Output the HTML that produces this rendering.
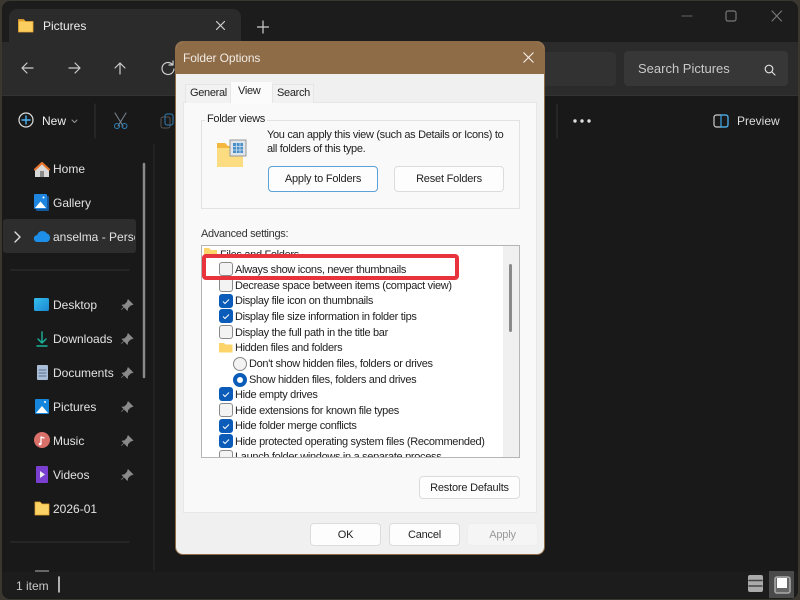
<!DOCTYPE html>
<html><head><meta charset="utf-8"><style>
html,body{margin:0;padding:0;width:800px;height:600px;overflow:hidden;background:#3a3630;font-family:"Liberation Sans",sans-serif}
*{box-sizing:border-box}
.a{position:absolute}
.t{position:absolute;white-space:nowrap;line-height:16px;height:16px}
.n{color:#e2e2e2;font-size:12px}
.d{color:#222;font-size:11px;letter-spacing:-.32px}
.btn{position:absolute;background:#fdfdfd;border:1px solid #dcdcdc;border-radius:4px;color:#222;font-size:11px;letter-spacing:-.2px;text-align:center}
.cb{position:absolute;left:17px;width:14px;height:14px;border-radius:3px;border:1px solid #8a8a8a;background:#f3f3f3}
.cb.on{background:#0a5cb8;border-color:#0a5cb8}
</style></head><body>
<div class="a" style="left:2px;top:1px;width:796px;height:598px;background:#1c1c1c;border-radius:8px;overflow:hidden">
<div class="a" style="left:0;top:41px;width:796px;height:53px;background:#2b2b2b"></div>
<div class="a" style="left:7px;top:8px;width:232px;height:36px;background:#2b2b2b;border-radius:8px 8px 0 0"></div>
<div class="a" style="left:0;top:94px;width:796px;height:477px;background:#191919;border-top:1px solid #333"></div>
<div class="a" style="left:0;top:571px;width:796px;height:27px;background:#1c1c1c"></div>
</div>
<div class="a" style="left:3px;top:219px;width:133px;height:34px;background:#2d2d2d;border-radius:3px"></div>
<div class="a" style="left:624px;top:51px;width:164px;height:35px;background:#373737;border-radius:4px"></div>
<div class="a" style="left:440px;top:52px;width:176px;height:34px;background:#323232;border-radius:4px"></div>
<svg class="a" style="left:0;top:0" width="800" height="600" fill="none" stroke-linecap="round" stroke-linejoin="round">
<defs><linearGradient id="g1" x1="0" y1="0" x2="1" y2="1"><stop offset="0" stop-color="#35c0ee"/><stop offset="1" stop-color="#1a86d0"/></linearGradient></defs>
<path d="M18.500 19.500h5l2 2h7.500v10.500H18.500z" fill="#fbcf5f" stroke="#e8a52e" stroke-width=".8"/>
<path d="M18.500 19.500h5l2 2h-7z" fill="#e8a52e"/>
<path d="M216.500 21.500l8 8M224.500 21.500l-8 8M263 21v12M257.500 27h11" stroke="#d0d0d0" stroke-width="1.200"/>
<path d="M22 68h11M27 63l-5 5 5 5M69 68h11M75 63l5 5-5 5M120 74V63M115 68l5-5 5 5" stroke="#ccc" stroke-width="1.200"/>
<path d="M172 64a6 6 0 1 0 2 5M173 61v4h-4" stroke="#ccc" stroke-width="1.200"/>
<circle cx="26" cy="120" r="7" stroke="#ddd" stroke-width="1.200"/><path d="M26 116v8M22 120h8" stroke="#4fb3f0" stroke-width="1.400"/>
<path d="M72 120l2.500 2.500 2.500-2.500" stroke="#999"/>
<path d="M95 104v34" stroke="#333"/>
<path d="M115 113l8 13M126 113l-8 13" stroke="#77808a" stroke-width="1.100"/><circle cx="117" cy="126" r="2.500" stroke="#2f7fb8"/><circle cx="124.500" cy="126" r="2.500" stroke="#2f7fb8"/>
<rect x="161" y="117" width="9" height="11" rx="2" stroke="#555"/><rect x="165" y="114" width="8" height="11" rx="2" stroke="#2f7fb8"/>
<path d="M557 104v34" stroke="#333"/>
<circle cx="575" cy="121" r="1.700" fill="#ddd"/><circle cx="582" cy="121" r="1.700" fill="#ddd"/><circle cx="589" cy="121" r="1.700" fill="#ddd"/>
<rect x="714" y="115" width="14" height="12" rx="2.500" stroke="#ccc" stroke-width="1.200"/><path d="M721 115h5a2 2 0 0 1 2 2v8a2 2 0 0 1-2 2h-5z" stroke="#3ba7e8" stroke-width="1.200"/>
<path d="M682 16h10" stroke="#555" stroke-width="1.200"/><rect x="726" y="11" width="10" height="10" rx="2" stroke="#777" stroke-width="1.200"/><path d="M772 11l9.500 10M781.500 11l-9.500 10" stroke="#777" stroke-width="1.200"/>
<circle cx="769" cy="69" r="3.800" stroke="#ddd" stroke-width="1.200"/><path d="M772 72l3 3" stroke="#ddd" stroke-width="1.200"/>
<path d="M42 163l-7 6v8h14v-8z" fill="#d8d8d8"/><path d="M35 169.500l7-6.500 7 6.500" stroke="#e8742a" stroke-width="2.200"/><rect x="40" y="171" width="4" height="6" fill="#8a8a8a"/>
<rect x="36" y="196" width="13" height="15" rx="1" fill="#14579c"/><rect x="34" y="194" width="13" height="15" rx="1" fill="#1f86e0"/><path d="M35 208l5.500-6.500L46 208z" fill="#fff"/><circle cx="43.500" cy="197.500" r="1" fill="#fff"/>
<path d="M37.500 242a3.500 3.500 0 0 1-.3-7 5.500 5.500 0 0 1 9.800-1.500 4.500 4.500 0 0 1 0 8.500z" fill="#1e8fe8"/>
<path d="M15 232l5 5-5 5" stroke="#ddd" stroke-width="1.400"/>
<path d="M11 270h118" stroke="#333"/>
<rect x="34" y="298" width="15" height="13" rx="1.500" fill="url(#g1)"/>
<path d="M42 332v11M38 339l4 4 4-4M37 346h10" stroke="#1bb39a" stroke-width="1.400"/>
<rect x="37" y="365" width="11" height="15" rx="1" fill="#a9bdd6"/><path d="M39 370h7M39 373h7M39 376h7" stroke="#56708f"/>
<rect x="35" y="399" width="14" height="15" rx="1" fill="#1586dc"/><path d="M36 413l6-7 6 7z" fill="#fff"/><circle cx="45" cy="402" r="1" fill="#fff"/>
<circle cx="42" cy="440" r="8" fill="#d9706a"/><path d="M41 444v-7l3 1" stroke="#fff" stroke-width="1.300"/><circle cx="40" cy="444" r="1.300" fill="#fff"/>
<rect x="36" y="466" width="12" height="17" rx="1" fill="#7a3fd0"/><path d="M40 471v7l5-3.500z" fill="#eee"/>
<path d="M35 502h5l2 2h7v11H35z" fill="#fbd266" stroke="#e8a52e" stroke-width=".7"/>
<path d="M11 542h118" stroke="#333"/>
<rect x="35" y="570" width="14" height="2" fill="#666"/>
<path d="M59 577v15" stroke="#eee" stroke-width="1.400"/>
<g fill="#8a8a8a" stroke="#8a8a8a" stroke-width=".6">
<path d="M128 299.500l5 5-2.500.8-2.700 2.700-.3 2.500-5.500-5.500 2.500-.3 2.700-2.700zM124.500 306.500l-3 3"/>
<path transform="translate(0 34)" d="M128 299.500l5 5-2.500.8-2.700 2.700-.3 2.500-5.500-5.500 2.500-.3 2.700-2.700zM124.500 306.500l-3 3"/>
<path transform="translate(0 68)" d="M128 299.500l5 5-2.500.8-2.700 2.700-.3 2.500-5.500-5.500 2.500-.3 2.700-2.700zM124.500 306.500l-3 3"/>
<path transform="translate(0 102)" d="M128 299.500l5 5-2.500.8-2.700 2.700-.3 2.500-5.500-5.500 2.500-.3 2.700-2.700zM124.500 306.500l-3 3"/>
<path transform="translate(0 136)" d="M128 299.500l5 5-2.500.8-2.700 2.700-.3 2.500-5.500-5.500 2.500-.3 2.700-2.700zM124.500 306.500l-3 3"/>
<path transform="translate(0 170)" d="M128 299.500l5 5-2.500.8-2.700 2.700-.3 2.500-5.500-5.500 2.500-.3 2.700-2.700zM124.500 306.500l-3 3"/>
</g>
<path d="M144 164v213" stroke="#8a8a8a" stroke-width="2.500"/>
<path d="M154 145v425" stroke="#262626" stroke-width="1.500"/>
<rect x="748" y="575" width="15" height="17" rx="2" fill="#aaa"/><path d="M749 580.500h13M749 586h13" stroke="#444" stroke-width="1.500"/>
<rect x="769" y="571" width="25" height="27" fill="#4a4a4a"/><rect x="775" y="577" width="15" height="16" rx="2" fill="#666" stroke="#aaa" stroke-width="1.500"/><rect x="777" y="578" width="10" height="10" fill="#fff"/>
</svg>
<div class="t n" style="left:43px;top:18px;color:#eee">Pictures</div>
<div class="t n" style="left:42px;top:113px;color:#eee">New</div>
<div class="t n" style="left:737px;top:113px;color:#ddd">Preview</div>
<div class="t" style="left:638px;top:61px;color:#c8c8c8;font-size:13px">Search Pictures</div>
<div class="t n" style="left:53px;top:161px">Home</div>
<div class="t n" style="left:53px;top:195px">Gallery</div>
<div class="t n" style="left:53px;top:229px;width:82px;overflow:hidden">anselma - Personal</div>
<div class="t n" style="left:53px;top:297px">Desktop</div>
<div class="t n" style="left:53px;top:331px">Downloads</div>
<div class="t n" style="left:53px;top:365px">Documents</div>
<div class="t n" style="left:53px;top:399px">Pictures</div>
<div class="t n" style="left:53px;top:433px">Music</div>
<div class="t n" style="left:53px;top:467px">Videos</div>
<div class="t n" style="left:53px;top:501px">2026-01</div>
<div class="t" style="left:16px;top:578px;color:#c8c8c8;font-size:12px">1 item</div>

<div class="a" style="left:175px;top:41px;width:370px;height:514px;background:#f0f0f0;border:1px solid #8e6c48;border-radius:8px;overflow:hidden">
<div class="a" style="left:0;top:0;width:368px;height:32px;background:#8e6c48"></div>
<div class="a" style="left:7px;top:60px;width:354px;height:411px;background:#f9f9f9;border:1px solid #e6e6e6"></div>
<div class="a" style="left:9px;top:42px;width:46px;height:19px;background:#f2f2f2;border:1px solid #e6e6e6;border-bottom:0"></div>
<div class="a" style="left:55px;top:40px;width:41px;height:22px;background:#fbfbfb"></div>
<div class="a" style="left:96px;top:42px;width:42px;height:19px;background:#f2f2f2;border:1px solid #e6e6e6;border-bottom:0"></div>
</div>
<div class="t" style="left:183px;top:50px;color:#f1ebe3;font-size:12px;letter-spacing:-.1px">Folder Options</div>
<svg class="a" style="left:522px;top:51px" width="14" height="14"><path d="M1.500 1.500l10 10M11.500 1.500l-10 10" stroke="#f5f0ea" stroke-width="1.100"/></svg>
<div class="t d" style="left:190px;top:85px">General</div>
<div class="t d" style="left:238px;top:83px">View</div>
<div class="t d" style="left:277px;top:85px">Search</div>
<div class="a" style="left:201px;top:120px;width:319px;height:89px;border:1px solid #e2e2e2"></div>
<div class="t d" style="left:205px;top:111px;background:#f9f9f9;padding:0 2px">Folder views</div>
<svg class="a" style="left:215px;top:138px" width="34" height="32"><path d="M2 5h8l3 3h15v21H2z" fill="#f4b840"/><path d="M2 10h26v19H2z" fill="#fcdc80"/><rect x="15" y="2" width="16" height="16" fill="#dfe5ea" stroke="#999"/><rect x="18" y="5" width="10" height="10" fill="#4a90c8"/><path d="M21.500 5v10M25 5v10M18 8.500h10M18 12h10" stroke="#d9e6f0" stroke-width=".7"/></svg>
<div class="t d" style="left:267px;top:127px">You can apply this view (such as Details or Icons) to</div>
<div class="t d" style="left:267px;top:141px">all folders of this type.</div>
<div class="btn" style="left:268px;top:166px;width:110px;height:26px;line-height:24px;border:1.500px solid #5ba2d8">Apply to Folders</div>
<div class="btn" style="left:394px;top:166px;width:110px;height:26px;line-height:25px">Reset Folders</div>
<div class="t d" style="left:201px;top:226px;color:#333">Advanced settings:</div>
<div class="a" style="left:201px;top:245px;width:319px;height:213px;background:#fff;border:1px solid #b5b5b5;overflow:hidden"></div>
<div class="a" style="left:503px;top:246px;width:16px;height:211px;background:#f0f0f0"></div>
<div class="a" style="left:509px;top:264px;width:3px;height:68px;background:#8a8a8a;border-radius:2px"></div>
<svg class="a" style="left:0;top:0" width="800" height="600" fill="none"><path d="M204 248h5l2 2h6v8h-13zM219 343h5l1.500 1.500h7v8h-13.500z" fill="#fcd46a"/></svg>
<div class="a" style="left:202px;top:246px;width:301px;height:211px;overflow:hidden">
<div class="t d" style="left:18px;top:1px">Files and Folders</div>
<div class="t d" style="left:33px;top:16px">Always show icons, never thumbnails</div>
<div class="t d" style="left:33px;top:32px">Decrease space between items (compact view)</div>
<div class="t d" style="left:33px;top:47px">Display file icon on thumbnails</div>
<div class="t d" style="left:33px;top:63px">Display file size information in folder tips</div>
<div class="t d" style="left:33px;top:79px">Display the full path in the title bar</div>
<div class="t d" style="left:33px;top:94px">Hidden files and folders</div>
<div class="t d" style="left:47px;top:110px">Don't show hidden files, folders or drives</div>
<div class="t d" style="left:47px;top:126px">Show hidden files, folders and drives</div>
<div class="t d" style="left:33px;top:141px">Hide empty drives</div>
<div class="t d" style="left:33px;top:157px">Hide extensions for known file types</div>
<div class="t d" style="left:33px;top:172px">Hide folder merge conflicts</div>
<div class="t d" style="left:33px;top:188px">Hide protected operating system files (Recommended)</div>
<div class="t d" style="left:33px;top:203px">Launch folder windows in a separate process</div>
<div class="cb" style="top:16px"></div>
<div class="cb" style="top:32px"></div>
<div class="cb on" style="top:48px"></div>
<div class="cb on" style="top:63px"></div>
<div class="cb" style="top:79px"></div>
<div class="cb on" style="top:141px"></div>
<div class="cb" style="top:157px"></div>
<div class="cb on" style="top:173px"></div>
<div class="cb on" style="top:188px"></div>
<div class="cb" style="top:204px"></div>
<div class="a" style="left:31px;top:111px;width:14px;height:14px;border-radius:50%;border:1px solid #888;background:#f3f3f3"></div>
<div class="a" style="left:31px;top:127px;width:14px;height:14px;border-radius:50%;border:4px solid #0a5cb8;background:#fff"></div>
<svg class="a" style="left:0;top:0" width="40" height="211" fill="none" stroke="#fff" stroke-width="1"><path d="M21 55.500l2 2 4-4M21 70.500l2 2 4-4M21 148.500l2 2 4-4M21 180.500l2 2 4-4M21 195.500l2 2 4-4"/></svg>
</div>
<div class="a" style="left:202px;top:254px;width:257px;height:26px;border:4px solid #e8333c;border-radius:4px"></div>
<div class="btn" style="left:419px;top:476px;width:101px;height:23px;line-height:22px">Restore Defaults</div>
<div class="btn" style="left:310px;top:523px;width:71px;height:23px;line-height:22px">OK</div>
<div class="btn" style="left:389px;top:523px;width:71px;height:23px;line-height:22px">Cancel</div>
<div class="btn" style="left:467px;top:523px;width:71px;height:23px;line-height:22px;background:#f5f5f5;border-color:#eee;color:#999">Apply</div>
</body></html>
